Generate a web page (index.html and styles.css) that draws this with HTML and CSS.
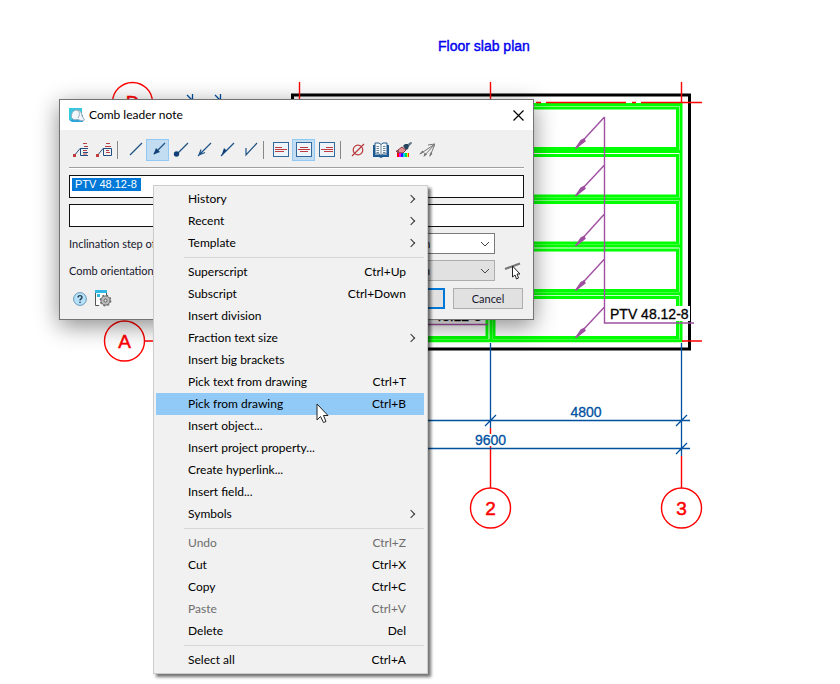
FILE: index.html
```html
<!DOCTYPE html>
<html lang="en">
<head>
<meta charset="utf-8">
<title>Floor slab plan</title>
<link rel="stylesheet" href="styles.css">
</head>
<body>
<main class="workspace">
  <svg class="plan" width="840" height="684" viewBox="0 0 840 684" role="img" aria-label="Floor slab plan drawing">
    <text class="plan-title" x="438" y="51">Floor slab plan</text>

    <!-- slabs -->
    <g class="slab">
      <path d="M400 340.8H681V104.5H400M491 104V341M491 151.5H681M491 199H681M491 246H681M491 293.8H681"/>
      <rect x="494" y="108" width="183.500" height="40.500"/>
      <rect x="494" y="155.500" width="183.500" height="40.500"/>
      <rect x="494" y="202.500" width="183.500" height="40.500"/>
      <rect x="494" y="250" width="183.500" height="40.500"/>
      <rect x="494" y="297.500" width="183.500" height="40"/>
      <rect x="300" y="297.500" width="187" height="40"/>
    </g>
    <rect class="wall" x="292.500" y="95" width="397" height="254"/>

    <!-- axes -->
    <g class="axis">
      <path d="M299.500 82V104M490.500 82V104M681.500 82V103M536 102.500H541M546 102.500H626M632 102.500H636M641 102.500H702M682 341H702M145 341H170M490.500 428V434M490.500 446V488M681.500 456V488"/>
      <circle cx="132.500" cy="102.500" r="20"/>
      <circle cx="124.500" cy="341" r="20"/>
      <circle cx="490.500" cy="508" r="20"/>
      <circle cx="681.500" cy="508" r="20"/>
    </g>
    <g class="axis-name">
      <text x="132.500" y="109">D</text>
      <text x="124.500" y="348">A</text>
      <text x="490.500" y="515">2</text>
      <text x="681.500" y="515">3</text>
    </g>

    <!-- dimensions -->
    <g class="dim">
      <path d="M490.500 343V428M681.500 343V456M400 420.500H690M400 448.500H690M485 426L496 415M676 426L687 415M676 454L687 443M192.500 94V104M187 95L192 100M220.500 94V104M215 95L220 100"/>
    </g>
    <g class="dim-text">
      <text x="586" y="417">4800</text>
      <text x="490.500" y="445">9600</text>
    </g>

    <!-- comb leader -->
    <g class="comb">
      <path d="M604.500 117V323H694M604.500 117L575.500 148.500M604.500 165L575.500 196M604.500 214L575.500 246M604.500 259L575.500 290.500M604.500 307L575.500 338M400 324.500H488"/>
      <path class="comb-head" d="M576 148L581 140.500L584 139L585 141ZM576 195.500L581 188L584 186.500L585 188.500ZM576 245.500L581 238L584 236.500L585 238.500ZM576 290L581 282.500L584 281L585 283ZM576 337.500L581 330L584 328.500L585 330.500Z"/>
    </g>
    <rect class="label-back" x="609" y="306" width="81" height="15"/>
    <text class="plan-label" x="610" y="319">PTV 48.12-8</text>
    <text class="plan-label" x="403" y="321">PTV 48.12-8</text>
  </svg>

  <section class="dialog" role="dialog" aria-labelledby="dialog-title">
    <header class="titlebar">
      <svg width="16" height="16" viewBox="0 0 16 16" aria-hidden="true">
        <path d="M0 1H13V8H14V15H3L0 13Z" fill="#28a4d8"/><path d="M0 1H13V5H5L3 9V13H0Z" fill="#38c8de"/>
        <path d="M2.500 10.500C2 5 5 3 8 3S13 6 13 9L15.500 13C12 15 10 12 8 12.500S4 13 2.500 10.500Z" fill="#f3f7fb" stroke="#94a9bd"/>
        <path d="M8 3C11 5 11 8 9 11" fill="none" stroke="#94a9bd"/>
      </svg>
      <h1 class="title" id="dialog-title">Comb leader note</h1>
      <button class="close" type="button" aria-label="Close">
        <svg width="11" height="11" viewBox="0 0 11 11"><path d="M0.500 0.500L10.500 10.500M10.500 0.500L0.500 10.500" stroke="#000" stroke-width="1.200"/></svg>
      </button>
    </header>

    <form class="form">
      <div class="toolbar" role="toolbar" aria-label="Leader options">
        <button class="tool" type="button" aria-label="Text at shelf">
          <svg viewBox="0 0 16 16"><path d="M1 14L7 6.500H15M7.500 7V13.500H15M10 10.500H15" fill="none" stroke="#1f4e82"/><path d="M10 1.500H14M11 4.500H15M10 8.500H14M10 12H14" stroke="#b64044"/><rect y="12" width="3" height="3" fill="#c03b3b"/></svg>
        </button>
        <button class="tool" type="button" aria-label="Text in frame">
          <svg viewBox="0 0 16 16"><path d="M1 14L7 6.500H15.500V13.500H7.500V7" fill="none" stroke="#1f4e82"/><path d="M10 1.500H14M9 4.500H15M10 8.500H13M10 10.500H14" stroke="#b64044"/><rect y="12" width="3" height="3" fill="#c03b3b"/></svg>
        </button>
        <span class="divider"></span>
        <button class="tool" type="button" aria-label="No arrow">
          <svg viewBox="0 0 16 16"><path d="M3 13L15 1" stroke="#1d5287" stroke-width="1.200"/></svg>
        </button>
        <button class="tool is-on" type="button" aria-label="Filled arrow" aria-pressed="true">
          <svg viewBox="0 0 16 16"><path d="M4 12L15 1" stroke="#1d5287" stroke-width="1.200"/><path d="M3.500 12.500L6 6L10 10Z" fill="#123f75"/></svg>
        </button>
        <button class="tool" type="button" aria-label="Dot">
          <svg viewBox="0 0 16 16"><path d="M4 12L15 1" stroke="#1d5287" stroke-width="1.200"/><circle cx="3.500" cy="12" r="2.700" fill="#123f75"/></svg>
        </button>
        <button class="tool" type="button" aria-label="Open arrow">
          <svg viewBox="0 0 16 16"><path d="M2 14L15 1M5 7.500L3 13L9 10.500" fill="none" stroke="#1d5287" stroke-width="1.200"/></svg>
        </button>
        <button class="tool" type="button" aria-label="Half arrow">
          <svg viewBox="0 0 16 16"><path d="M2 14L15 1" stroke="#1d5287" stroke-width="1.200"/><path d="M2.500 13.500L5 6L7.500 8.500Z" fill="#123f75"/></svg>
        </button>
        <button class="tool" type="button" aria-label="Half open arrow">
          <svg viewBox="0 0 16 16"><path d="M4 6V13L15 1" fill="none" stroke="#1d5287" stroke-width="1.200"/></svg>
        </button>
        <span class="divider"></span>
        <button class="tool" type="button" aria-label="Align left">
          <svg viewBox="0 0 16 16"><rect x="0.500" y="0.500" width="15" height="14" fill="#eef5fa" stroke="#32699c"/><path d="M2 5.500H9M2 7.500H14M2 9.500H11" stroke="#bd3c40"/></svg>
        </button>
        <button class="tool is-on" type="button" aria-label="Align center" aria-pressed="true">
          <svg viewBox="0 0 16 16"><rect x="0.500" y="0.500" width="15" height="14" fill="#eef5fa" stroke="#32699c"/><path d="M4 5.500H12M2 7.500H14M4 9.500H12" stroke="#bd3c40"/></svg>
        </button>
        <button class="tool" type="button" aria-label="Align right">
          <svg viewBox="0 0 16 16"><rect x="0.500" y="0.500" width="15" height="14" fill="#eef5fa" stroke="#32699c"/><path d="M7 5.500H14M2 7.500H14M5 9.500H14" stroke="#bd3c40"/></svg>
        </button>
        <span class="divider"></span>
        <button class="tool" type="button" aria-label="Symbol">
          <svg viewBox="0 0 16 16"><circle cx="8" cy="8" r="4.800" fill="none" stroke="#b8393b" stroke-width="1.200"/><path d="M2 14L14 2" stroke="#b8393b" stroke-width="1.200"/></svg>
        </button>
        <button class="tool" type="button" aria-label="Notebook">
          <svg viewBox="0 0 16 16"><path d="M0 3H2V13H8H14V3H16V15H10L8 16L6 15H0Z" fill="#1c5a94"/><path d="M2 1H6L8 2.500L10 1H14V12H10L8 13.500L6 12H2Z" fill="#f4f8fb" stroke="#285d8c"/><path d="M8 3V13M3.500 4.500H6M3.500 6.500H6M3.500 8.500H6M3.500 10.500H6M10 4.500H12.500M10 6.500H12.500M10 8.500H12.500M10 10.500H12.500" stroke="#6d8799"/></svg>
        </button>
        <button class="tool" type="button" aria-label="Copy properties">
          <svg viewBox="0 0 16 16"><path d="M1 11H3V15H1Z" fill="#f00"/><path d="M3 11H5V15H3Z" fill="#e0f"/><path d="M5 11H7V15H5Z" fill="#22f"/><path d="M7 11H9V15H7Z" fill="#0cf"/><path d="M9 11H11V15H9Z" fill="#0d4"/><path d="M11 11H12V15H11Z" fill="#fe0"/><path d="M12 11H13V15H12Z" fill="#f30"/><path d="M0 9.500L6 5L10 8L7 11L1 10.500L3 9Z" fill="#e58f94" stroke="#863b43"/><path d="M7 4L9 2L12 2L15 0L16 1L13 4L12 7L10 8Z" fill="#28465f"/><path d="M12 3L15 1" stroke="#7895a5"/></svg>
        </button>
        <button class="tool" type="button" aria-label="Comb leaders">
          <svg viewBox="0 0 16 16"><path d="M16 2L1 12M16 2L5 14M16 2L11 14M16 2L9 3" fill="none" stroke="#777"/><path d="M0 12.500L3.500 8.500L5 10.500ZM4.500 15L5.500 10.500L8 12.500ZM10.500 15L11 10.500L13.500 11.500Z" fill="#777"/></svg>
        </button>
      </div>

      <input class="note" id="note-top" aria-label="Text above the shelf" value="PTV 48.12-8" type="text">
      <input class="note is-plain" aria-label="Text below the shelf" type="text">

      <div class="field">
        <label for="step">Inclination step of</label>
        <select class="drop" id="step"><option>5.0 mm</option></select>
        <span class="side"></span>
      </div>
      <div class="field">
        <label for="orient">Comb orientation on</label>
        <select class="drop is-grey" id="orient"><option>Bottom</option></select>
        <button class="side" type="button" aria-label="Pick direction">
          <svg width="18" height="18" viewBox="0 0 18 18"><path d="M1 7L16 1.500" stroke="#777" stroke-width="2"/><path d="M8.500 4V15L11 13L12.500 17L14.500 16L13 12H16Z" fill="#fff" stroke="#222"/></svg>
        </button>
      </div>

      <footer class="actions">
        <button class="mini" type="button" aria-label="Help">
          <svg width="14" height="14" viewBox="0 0 14 14"><circle cx="7" cy="7" r="6.400" fill="#b5e1fb" stroke="#6898b3"/><path d="M5 5.500C5 3 9 3 9 5.300C9 7 7 6.700 7 8.500M7 9.700V11" fill="none" stroke="#263c4f" stroke-width="1.400"/></svg>
        </button>
        <button class="mini" type="button" aria-label="Settings">
          <svg width="17" height="17" viewBox="0 0 17 17"><path d="M1 3H11V8L5 15H1Z" fill="#fff"/><path d="M0.500 1V15.500H4M11.500 3V5" fill="none" stroke="#555"/><path d="M0 0H12V3H0ZM2 4H5V7H2Z" fill="#32b6e3"/><circle cx="10.500" cy="10.500" r="4.600" fill="#bbb" stroke="#666"/><circle cx="10.500" cy="10.500" r="5.300" fill="none" stroke="#666" stroke-width="1.200" stroke-dasharray="2 2.160"/><circle cx="10.500" cy="10.500" r="1.500" fill="#eee" stroke="#555"/></svg>
        </button>
        <button class="push is-default" type="button">OK</button>
        <button class="push" type="button">Cancel</button>
      </footer>
    </form>
  </section>

  <ul class="menu" role="menu">
    <li><button class="item" role="menuitem">History<i class="more"></i></button></li>
    <li><button class="item" role="menuitem">Recent<i class="more"></i></button></li>
    <li><button class="item" role="menuitem">Template<i class="more"></i></button></li>
    <li class="rule" role="separator"></li>
    <li><button class="item" role="menuitem">Superscript<kbd>Ctrl+Up</kbd></button></li>
    <li><button class="item" role="menuitem">Subscript<kbd>Ctrl+Down</kbd></button></li>
    <li><button class="item" role="menuitem">Insert division</button></li>
    <li><button class="item" role="menuitem">Fraction text size<i class="more"></i></button></li>
    <li><button class="item" role="menuitem">Insert big brackets</button></li>
    <li><button class="item" role="menuitem">Pick text from drawing<kbd>Ctrl+T</kbd></button></li>
    <li><button class="item is-hot" role="menuitem">Pick from drawing<kbd>Ctrl+B</kbd></button></li>
    <li><button class="item" role="menuitem">Insert object...</button></li>
    <li><button class="item" role="menuitem">Insert project property...</button></li>
    <li><button class="item" role="menuitem">Create hyperlink...</button></li>
    <li><button class="item" role="menuitem">Insert field...</button></li>
    <li><button class="item" role="menuitem">Symbols<i class="more"></i></button></li>
    <li class="rule" role="separator"></li>
    <li><button class="item" role="menuitem" disabled>Undo<kbd>Ctrl+Z</kbd></button></li>
    <li><button class="item" role="menuitem">Cut<kbd>Ctrl+X</kbd></button></li>
    <li><button class="item" role="menuitem">Copy<kbd>Ctrl+C</kbd></button></li>
    <li><button class="item" role="menuitem" disabled>Paste<kbd>Ctrl+V</kbd></button></li>
    <li><button class="item" role="menuitem">Delete<kbd>Del</kbd></button></li>
    <li class="rule" role="separator"></li>
    <li><button class="item" role="menuitem">Select all<kbd>Ctrl+A</kbd></button></li>
  </ul>

  <svg class="pointer" width="14" height="21" viewBox="0 0 14 21" aria-hidden="true"><path d="M1 1V17L4.500 13.500L7.500 19.500L10 18.500L7.500 12.500H12Z" fill="#fff" stroke="#222"/></svg>
</main>
</body>
</html>
```
FILE: styles.css
```css
* { box-sizing: border-box; }

body {
  margin: 0;
  background: #fff;
  color: #000;
  font: 12px/16px Lato, "Open Sans", sans-serif;
}

button, input, select { margin: 0; font: inherit; color: inherit; }
button { padding: 0; border: 0; background: none; }

.workspace { position: relative; min-height: 684px; overflow: hidden; }

/* drawing */
.plan { display: block; font-family: "Liberation Sans", Arial, sans-serif; font-size: 14px; }
.plan-title { fill: #0000f0; stroke: #0000f0; stroke-width: 0.4px; }
.slab path, .slab rect { fill: none; stroke: #00ff00; stroke-width: 3px; }
.wall { fill: none; stroke: #000; stroke-width: 3px; }
.axis path, .axis circle { fill: none; stroke: #ff0000; stroke-width: 1.4px; }
.axis-name { fill: #ff0000; stroke: #ff0000; stroke-width: 0.5px; font-size: 19px; text-anchor: middle; }
.dim path { fill: none; stroke: #0050a0; stroke-width: 1.3px; }
.dim-text { fill: #0050a0; stroke: #0050a0; stroke-width: 0.3px; text-anchor: middle; }
.comb path { fill: none; stroke: #a050a0; stroke-width: 1.4px; }
.comb .comb-head { fill: #a050a0; }
.label-back { fill: #fff; }
.plan-label { stroke: #000; stroke-width: 0.3px; }

/* dialog */
.dialog {
  position: absolute;
  left: 59px;
  top: 99px;
  width: 475px;
  border: 1px solid #737373;
  background: #f0f0f0;
  box-shadow: 0 6px 22px rgba(0, 0, 0, 0.45);
}
.titlebar { display: flex; align-items: center; gap: 4px; height: 30px; padding: 0 9px; background: #fff; }
.title { flex: 1; margin: 0; font-size: 12px; font-weight: 400; }
.close { display: flex; }
.form { padding: 9px 9px 10px; font-size: 11px; }

.toolbar { display: flex; align-items: center; height: 29px; padding-bottom: 6px; border-bottom: 1px solid #a0a0a0; box-shadow: 0 1px #fff; }
.tool { display: flex; align-items: center; width: 23px; height: 22px; padding-left: 3px; border: 1px solid transparent; }
.tool svg { flex: none; width: 16px; height: 16px; }
.tool.is-on { background: #c2ddf2; border-color: #90c8f6; }
.divider { width: 8px; height: 18px; background: linear-gradient(#888, #888) 2px 0 / 1px 100% no-repeat; }

.note {
  display: block;
  width: 100%;
  height: 23px;
  margin-top: 6px;
  padding: 0 5px 5px;
  border: 1px solid #111;
  border-radius: 0;
  color: #fff;
  font: 11px/16px "Liberation Sans", sans-serif;
  background: linear-gradient(#0078d7, #0078d7) 2px 2px / 69px 13px no-repeat #fff;
}
.toolbar + .note { margin-top: 7px; }
.note.is-plain { background: #fff; color: #000; }

.field { display: flex; align-items: center; margin-top: 6px; color: #16162c; }
.field label { flex: 1; }
.drop {
  appearance: none;
  width: 108px;
  height: 21px;
  padding: 0 6px;
  border: 1px solid #7a7a7a;
  border-radius: 0;
  background: #fff url("data:image/svg+xml,%3Csvg xmlns='http://www.w3.org/2000/svg' width='10' height='6'%3E%3Cpath d='M1 1l4 4 4-4' fill='none' stroke='%23444'/%3E%3C/svg%3E") right 4px center no-repeat;
}
.drop.is-grey { background-color: #e1e1e1; border-color: #adadad; }
.side { display: flex; justify-content: flex-end; width: 29px; padding-right: 2px; }

.actions { display: flex; align-items: center; gap: 8px; margin-top: 7px; padding: 0 1px 0 4px; }
.mini { display: flex; }
.push { width: 70px; height: 21px; border: 1px solid #adadad; background: #e1e1e1; color: #16162c; }
.push.is-default { margin-left: auto; border: 2px solid #0078d7; }

/* context menu */
.menu {
  position: absolute;
  left: 153px;
  top: 185px;
  width: 275px;
  margin: 0;
  padding: 2px 3px 2px 2px;
  border: 1px solid #ccc;
  background: #f1f1f1;
  list-style: none;
  box-shadow: 3px 3px 3px rgba(0, 0, 0, 0.55);
}
.item { display: flex; align-items: center; justify-content: space-between; width: 100%; height: 22px; padding: 0 18px 0 32px; text-align: left; }
.item kbd { font: inherit; }
.item:disabled { color: #6d6d6d; }
.item.is-hot { background: #91c9f7; }
.more { width: 6px; height: 6px; margin-right: -8px; border: solid #333; border-width: 1px 1px 0 0; transform: rotate(45deg); }
.rule { height: 7px; padding: 3px 0 3px 28px; }
.rule::before { content: ""; display: block; height: 1px; background: #d7d7d7; }

.pointer { position: absolute; left: 316px; top: 403px; }
```
